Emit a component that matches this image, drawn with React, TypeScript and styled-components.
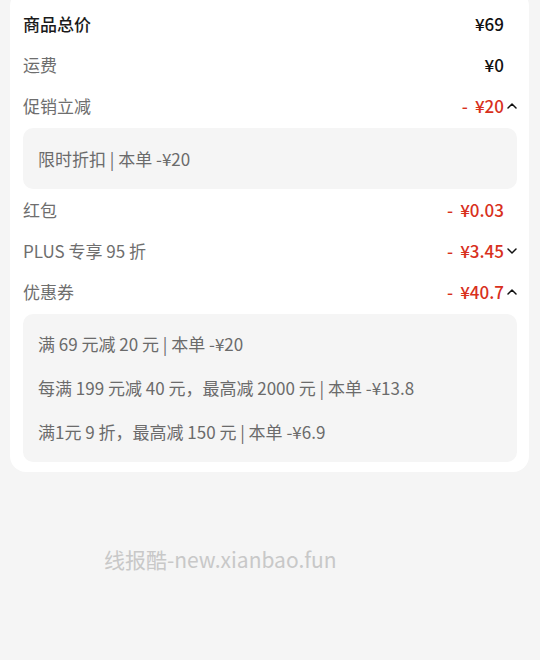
import React from "react";
import styled, { createGlobalStyle } from "styled-components";

const Global = createGlobalStyle`
  html, body { margin: 0; padding: 0; background: #f5f5f5; }
  body { font-family: "Noto Sans CJK SC", "Noto Sans", sans-serif; -webkit-font-smoothing: antialiased; }
`;

const Page = styled.div`
  width: 540px;
  min-height: 660px;
  background: #f5f5f5;
  overflow: hidden;
`;

const Card = styled.div`
  margin: -10px 11px 0 10px;
  background: #fff;
  border-radius: 16px;
  padding: 15px 12px 10px 13px;
  display: flex;
  flex-direction: column;
`;

const Row = styled.div`
  box-sizing: border-box;
  height: 41px;
  padding-bottom: 4px;
  display: flex;
  align-items: center;
  justify-content: space-between;
`;

const Label = styled.span<{ $strong?: boolean }>`
  font-size: 17px;
  color: ${(p) => (p.$strong ? "#1a1a1a" : "#6e6e6e")};
  font-weight: ${(p) => (p.$strong ? 500 : 400)};
`;

const ValueWrap = styled.div`
  display: flex;
  align-items: center;
`;

const Value = styled.span<{ $red?: boolean }>`
  font-size: 17px;
  font-weight: 500;
  color: ${(p) => (p.$red ? "#d8301c" : "#111")};
  white-space: pre;
`;

const Minus = styled.span`
  margin-right: 7px;
`;

const ChevronSlot = styled.span`
  width: 13px;
  height: 12px;
  display: flex;
  align-items: center;
  justify-content: flex-end;
`;

const Detail = styled.div<{ $mb?: number; $pt?: number }>`
  background: #f5f5f5;
  border-radius: 10px;
  padding: ${(p) => p.$pt ?? 8}px 15px 8px;
  margin-bottom: ${(p) => p.$mb ?? 0}px;
`;

const DetailLine = styled.div`
  height: 44px;
  line-height: 44px;
  font-size: 17px;
  color: #6b6b6b;
  white-space: pre;
`;

const Watermark = styled.div`
  margin-top: 72px;
  padding-left: 104px;
  font-size: 21px;
  color: #c8c8c8;
`;

const Chevron = ({ up }: { up: boolean }) => (
  <svg width="10" height="6" viewBox="0 0 10 6">
    <path
      d={up ? "M1 5 L5 1 L9 5" : "M1 1 L5 5 L9 1"}
      fill="none"
      stroke="#111"
      strokeWidth="1.5"
      strokeLinecap="round"
      strokeLinejoin="round"
    />
  </svg>
);

type RowProps = { label: string; value: string; red?: boolean; strong?: boolean; chevron?: "up" | "down" };

const PriceRow = ({ label, value, red, strong, chevron }: RowProps) => (
  <Row>
    <Label $strong={strong}>{label}</Label>
    <ValueWrap>
      <Value $red={red}>
        {red && <Minus>-</Minus>}
        {value}
      </Value>
      <ChevronSlot>{chevron && <Chevron up={chevron === "up"} />}</ChevronSlot>
    </ValueWrap>
  </Row>
);

export default function App() {
  return (
    <Page>
      <Global />
      <Card>
        <PriceRow label="商品总价" value="¥69" strong />
        <PriceRow label="运费" value="¥0" />
        <PriceRow label="促销立减" value="¥20" red chevron="up" />
        <Detail $mb={2} $pt={9}>
          <DetailLine>限时折扣 | 本单 -¥20</DetailLine>
        </Detail>
        <PriceRow label="红包" value="¥0.03" red />
        <PriceRow label="PLUS 专享 95 折" value="¥3.45" red chevron="down" />
        <PriceRow label="优惠券" value="¥40.7" red chevron="up" />
        <Detail>
          <DetailLine>满 69 元减 20 元 | 本单 -¥20</DetailLine>
          <DetailLine>每满 199 元减 40 元，最高减 2000 元 | 本单 -¥13.8</DetailLine>
          <DetailLine>满1元 9 折，最高减 150 元 | 本单 -¥6.9</DetailLine>
        </Detail>
      </Card>
      <Watermark>线报酷-new.xianbao.fun</Watermark>
    </Page>
  );
}
